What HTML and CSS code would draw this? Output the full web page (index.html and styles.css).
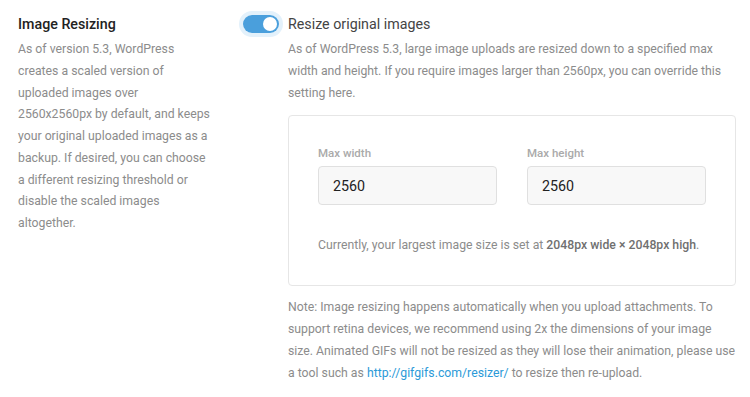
FILE: index.html
```html
<!DOCTYPE html>
<html lang="en">
<head>
  <meta charset="UTF-8">
  <title>Image Resizing</title>
  <link rel="stylesheet" href="styles.css">
</head>
<body>

  <div class="settings-row">
    <div class="settings-label">
      <h3>Image Resizing</h3>
      <p>As of version 5.3, WordPress creates a scaled version of uploaded images over 2560x2560px by default, and keeps your original uploaded images as a backup. If desired, you can choose a different resizing threshold or disable the scaled images altogether.</p>
    </div>

    <div class="settings-content">
      <div class="toggle-row">
        <label class="toggle">
          <input type="checkbox" checked>
          <span class="slider"></span>
        </label>
        <span class="toggle-title">Resize original images</span>
      </div>

      <p class="desc">As of WordPress 5.3, large image uploads are resized down to a specified max width and height. If you require images larger than 2560px, you can override this setting here.</p>

      <div class="box">
        <div class="fields">
          <div class="field">
            <label>Max width</label>
            <input type="text" value="2560">
          </div>
          <div class="field">
            <label>Max height</label>
            <input type="text" value="2560">
          </div>
        </div>
        <p class="current">Currently, your largest image size is set at <strong>2048px wide × 2048px high</strong>.</p>
      </div>

      <p class="note">Note: Image resizing happens automatically when you upload attachments. To support retina devices, we recommend using 2x the dimensions of your image size. Animated GIFs will not be resized as they will lose their animation, please use a tool such as <a href="#">http://gifgifs.com/resizer/</a> to resize then re-upload.</p>
    </div>
  </div>

</body>
</html>
```

FILE: styles.css
```css
body {
  font-family: Roboto, "Liberation Sans", sans-serif;
  margin: 0;
  padding: 13px 14px 0 18px;
  color: #8c8c8c;
  background: #fff;
}

.settings-row {
  display: flex;
  gap: 76px;
}

.settings-label {
  width: 194px;
  flex-shrink: 0;
}

.settings-label h3 {
  margin: 0 0 4px;
  font-size: 14.25px;
  font-weight: 500;
  color: #222;
  line-height: 22px;
}

.settings-label p {
  margin: 0;
  font-size: 12.25px;
  line-height: 21.75px;
}

.settings-content {
  flex: 1;
}

.toggle-row {
  display: flex;
  align-items: center;
  gap: 5px;
  height: 22px;
  margin-left: -49px;
}

.toggle {
  position: relative;
  display: inline-block;
  width: 36px;
  height: 18px;
  border: 4px solid #e3f1fb;
  border-radius: 14px;
}

.toggle input {
  display: none;
}

.slider {
  position: absolute;
  inset: 0;
  background: #4a9fdc;
  border-radius: 9px;
}

.slider::after {
  content: "";
  position: absolute;
  top: 2px;
  right: 2px;
  width: 14px;
  height: 14px;
  border-radius: 50%;
  background: #fff;
}

.toggle-title {
  font-size: 14.25px;
  font-weight: 400;
  color: #444;
  line-height: 22px;
}

.desc {
  margin: 4px 0 11px;
  font-size: 12.25px;
  line-height: 21.75px;
}

.box {
  border: 1px solid #e6e6e6;
  border-radius: 4px;
  padding: 28px 29px 29px;
}

.fields {
  display: flex;
  gap: 30px;
}

.field {
  display: flex;
  flex-direction: column;
  gap: 4px;
}

.field label {
  font-size: 11.5px;
  font-weight: 500;
  color: #aaa;
  line-height: 18px;
}

.field input {
  width: 179px;
  height: 39px;
  box-sizing: border-box;
  border: 1px solid #e0e0e0;
  border-radius: 4px;
  background: #f8f8f8;
  padding: 0 14px;
  font-family: inherit;
  font-size: 14.25px;
  font-weight: 400;
  color: #222;
  outline: none;
}

.current {
  margin: 29px 0 0;
  font-size: 12.25px;
  line-height: 22px;
}

.current strong {
  font-weight: 500;
  color: #707070;
}

.note {
  margin: 10px 0 0;
  font-size: 12.25px;
  line-height: 22px;
}

.note a {
  color: #2b9ad8;
  text-decoration: none;
}
```
